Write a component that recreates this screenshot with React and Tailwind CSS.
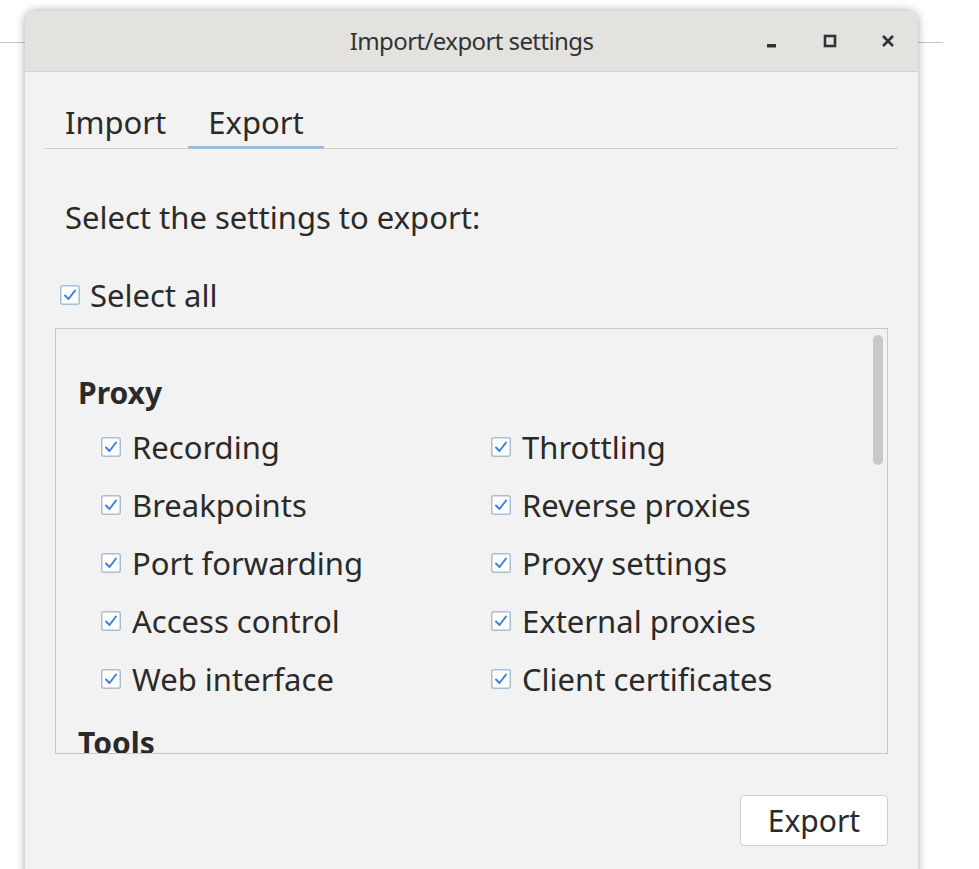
import React from "react";

const Check = ({ className = "" }) => (
  <svg width="20" height="20" viewBox="0 0 20 20" className={className}>
    <rect x="0.75" y="0.75" width="18.5" height="18.5" rx="2" fill="#fff" stroke="#a9bed6" strokeWidth="1.5" />
    <path d="M5 10.5 L8.5 14 L15 5.5" fill="none" stroke="#3d84d8" strokeWidth="2" strokeLinecap="round" strokeLinejoin="round" />
  </svg>
);

const left = ["Recording", "Breakpoints", "Port forwarding", "Access control", "Web interface"];
const right = ["Throttling", "Reverse proxies", "Proxy settings", "External proxies", "Client certificates"];

const Item = ({ label }) => (
  <div className="flex items-center h-[58px] gap-[11px]">
    <Check />
    <span>{label}</span>
  </div>
);

export default function App() {
  return (
    <div className="relative w-[979px] h-[869px] bg-white overflow-hidden" style={{ fontFamily: '"Noto Sans", "Open Sans", sans-serif' }}>
      {/* background app line */}
      <div className="absolute left-0 top-[42px] w-[943px] border-t border-[#c4c4c4]" />

      {/* window */}
      <div className="absolute left-[25px] top-[11px] w-[893px] h-[880px] rounded-t-[10px] bg-[#f2f2f2] shadow-[0_0_10px_rgba(0,0,0,0.35)] overflow-hidden flex flex-col">
        <div className="relative h-[61px] bg-[#e4e2de] border-b border-[#d2d0cc] flex items-center justify-center text-[24px] text-[#2e3436] tracking-[-0.6px]">
          Import/export settings
          <div className="absolute right-[22px] top-0 h-full flex items-center gap-[42px] text-[#2e3436]">
            <svg width="16" height="16" viewBox="0 0 16 16"><rect x="3" y="11" width="9" height="3.5" fill="#2e3436" /></svg>
            <svg width="16" height="16" viewBox="0 0 16 16"><rect x="3" y="3" width="10" height="10" fill="none" stroke="#2e3436" strokeWidth="2.6" /></svg>
            <svg width="16" height="16" viewBox="0 0 16 16"><path d="M3 3 L13 13 M13 3 L3 13" stroke="#2e3436" strokeWidth="2.6" /></svg>
          </div>
        </div>

        <div className="px-[20px] pt-[32px] text-[31px] text-[#2a2a2a]">
          <div className="flex border-b border-[#cfcfcf] h-[45px] items-start">
            <div className="pl-[20px] pr-[22px] leading-[36px]">Import</div>
            <div className="px-[20px] leading-[36px] h-[45px] border-b-[3px] border-[#9cbbdc]">Export</div>
          </div>

          <div className="pl-[20px] pt-[46px] leading-[44px]">Select the settings to export:</div>

          <div className="pl-[15px] pt-[34px] flex items-center gap-[10px] leading-[44px]">
            <Check />
            <span>Select all</span>
          </div>

          <div className="ml-[10px] mt-[11px] w-[833px] h-[426px] border border-[#c8c8c8] relative overflow-hidden">
            <div className="absolute right-[4px] top-[6px] w-[10px] h-[130px] rounded-full bg-[#c9c9c9]" />
            <div className="pl-[22px] pt-[43px]">
              <div className="font-bold text-[30px] leading-[42px]">Proxy</div>
              <div className="pl-[23px] pt-[4px] grid grid-cols-[390px_1fr]">
                <div>{left.map((l) => <Item key={l} label={l} />)}</div>
                <div>{right.map((l) => <Item key={l} label={l} />)}</div>
              </div>
              <div className="font-bold text-[30px] leading-[42px] pt-[14px]">Tools</div>
            </div>
          </div>

          <div className="flex justify-end pt-[41px] pr-[10px]">
            <button className="w-[148px] h-[51px] bg-white border border-[#cfcfcf] rounded-[4px] text-[30px] leading-none text-[#2a2a2a]">Export</button>
          </div>
        </div>
      </div>
    </div>
  );
}
